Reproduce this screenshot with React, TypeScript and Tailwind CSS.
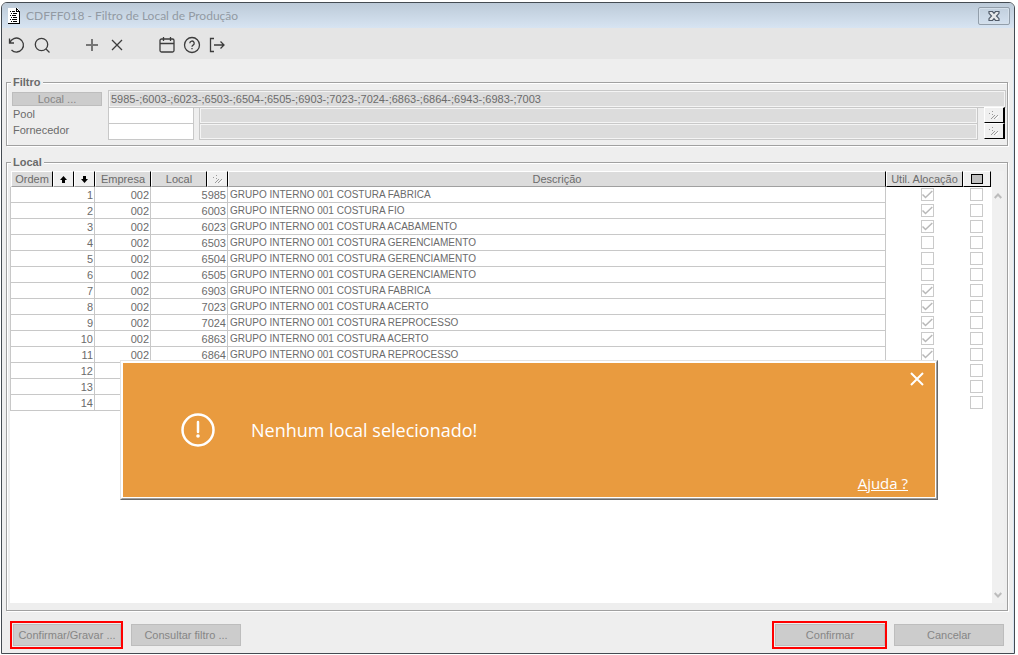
import React from "react";

type Row = { empresa?: string; local?: string; descricao?: string; aloca?: boolean };

const rows: Row[] = [
  { empresa: "002", local: "5985", descricao: "GRUPO INTERNO 001 COSTURA FABRICA", aloca: true },
  { empresa: "002", local: "6003", descricao: "GRUPO INTERNO 001 COSTURA FIO", aloca: true },
  { empresa: "002", local: "6023", descricao: "GRUPO INTERNO 001 COSTURA ACABAMENTO", aloca: true },
  { empresa: "002", local: "6503", descricao: "GRUPO INTERNO 001 COSTURA GERENCIAMENTO" },
  { empresa: "002", local: "6504", descricao: "GRUPO INTERNO 001 COSTURA GERENCIAMENTO" },
  { empresa: "002", local: "6505", descricao: "GRUPO INTERNO 001 COSTURA GERENCIAMENTO" },
  { empresa: "002", local: "6903", descricao: "GRUPO INTERNO 001 COSTURA FABRICA", aloca: true },
  { empresa: "002", local: "7023", descricao: "GRUPO INTERNO 001 COSTURA ACERTO", aloca: true },
  { empresa: "002", local: "7024", descricao: "GRUPO INTERNO 001 COSTURA REPROCESSO", aloca: true },
  { empresa: "002", local: "6863", descricao: "GRUPO INTERNO 001 COSTURA ACERTO", aloca: true },
  { empresa: "002", local: "6864", descricao: "GRUPO INTERNO 001 COSTURA REPROCESSO", aloca: true },
  {},
  {},
  {},
];

const locais = "5985-;6003-;6023-;6503-;6504-;6505-;6903-;7023-;7024-;6863-;6864-;6943-;6983-;7003";

function Dots() {
  return (
    <svg width="12" height="9" viewBox="0 0 12 9" aria-hidden="true">
      <path d="M1 2h1v1h-1zM4 0h1v1h-1zM4 3h1v1h-1zM3 7h1v1h-1zM4 6h1v1h-1zM5 5h1v1h-1zM6 4h1v1h-1zM6 7h1v1h-1zM7 6h1v1h-1zM8 5h1v1h-1zM9 4h1v1h-1z" fill="#9a9a9a" />
      <path d="M8 7h1v1h-1zM9 6h1v1h-1zM10 5h1v1h-1z" fill="#fff" />
    </svg>
  );
}

function Arrow({ down = false }: { down?: boolean }) {
  return (
    <svg width="7" height="7" viewBox="0 0 7 7" fill="#000" aria-hidden="true">
      <path d={down ? "M2 0h3v3h2L3.500 7 0 3h2z" : "M2 7h3V4h2L3.500 0 0 4h2z"} />
    </svg>
  );
}

function Check({ checked = false, label }: { checked?: boolean; label: string }) {
  return (
    <span className="mx-auto grid h-[13px] w-[13px] place-items-center">
      <input
        type="checkbox"
        defaultChecked={checked}
        aria-label={label}
        className="col-start-1 row-start-1 h-[13px] w-[13px] appearance-none border border-[#cacaca] bg-white"
      />
      {checked && (
        <svg className="pointer-events-none col-start-1 row-start-1" width="11" height="9" viewBox="0 0 11 9" fill="none" stroke="#b8b8b8" strokeWidth="1.5" aria-hidden="true">
          <path d="M.5 4.500L3.500 7.500 10.300 1" />
        </svg>
      )}
    </span>
  );
}

function Tool({ label, className = "", children }: { label: string; className?: string; children: React.ReactNode }) {
  return (
    <button type="button" aria-label={label} className={`grid h-[25px] w-[25px] place-items-center ${className}`}>
      <svg width="18" height="18" viewBox="0 0 18 18" fill="none" stroke="#3c3c3c" strokeWidth="1.3" aria-hidden="true">
        {children}
      </svg>
    </button>
  );
}

const headBase = "flex h-4 items-center justify-center border-t border-l border-t-white border-l-white border-b border-b-[#a0a0a0] border-r border-r-black";
const headGray = `${headBase} bg-[#dcdcdc]`;
const headBtn = `${headBase} bg-[#f0f0f0]`;
const footBtn = "h-[22px] border border-[#bdbdbd] bg-[#cccccc] text-[#868686]";
const gray = "min-w-0 border border-[#c8c8c8] bg-[#dcdcdc] shadow-[inset_0_0_0_1px_#f4f4f4] outline-none";
const cellBase = "h-4 border-r border-b border-[#c8c8c8] p-0 pt-px leading-[14px]";
const cell = `${cellBase} pr-px text-right`;
const lookup = "grid h-4 w-[21px] place-items-center border-t border-l border-r-2 border-b border-t-white border-l-white border-r-black border-b-black bg-[#f0f0f0]";
const group = "relative border border-[#a0a0a0] shadow-[1px_1px_0_#fff,inset_1px_1px_0_#fff]";
const legend = "absolute -top-[9px] left-1 bg-[#eeeeee] px-[2px] text-[11px] leading-4 font-bold text-[#6b6b6b]";

export default function App() {
  return (
    <div className="flex min-h-screen flex-col bg-white pt-[2px] pr-[3px] pb-px pl-px font-['Liberation_Sans',Arial,sans-serif] text-[11px] leading-4 text-[#6b6b6b]">
      <main className="relative flex flex-1 flex-col rounded-t-[6px] border border-[#444b52] bg-[#eeeeee]">
        <header className="flex h-[25px] items-center rounded-t-[5px] bg-linear-to-b from-[#bccad8] to-[#d7e4f2] pr-1 pl-[6px]">
          <svg width="12" height="16" viewBox="0 0 12 16" shapeRendering="crispEdges" aria-hidden="true">
            <path d="M0 0h9l3 3v13H0z" fill="#fff" />
            <path d="M0 15h12v1H0zM11 3h1v13h-1zM8 0h1v4H8zM8 3h4v1H8zM9 1h1v1H9zM10 2h1v1h-1z" fill="#000" />
            <path d="M2 3h1v1H2zM4 3h3v1H4zM3 5h1v1H3zM5 5h4v1H5zM2 7h1v1H2zM4 7h4v1H4zM3 9h1v1H3zM5 9h4v1H5zM2 11h1v1H2zM4 11h5v1H4zM3 13h1v1H3zM5 13h4v1H5z" fill="#000" />
          </svg>
          <h1 className="ml-[6px] flex-1 font-['Lato','Open_Sans',sans-serif] text-[12px] font-normal text-[#929aa3]">CDFFF018 - Filtro de Local de Produção</h1>
          <button type="button" aria-label="Fechar janela" className="grid h-[18px] w-8 place-items-center rounded-[2px] border border-[#929eaa] shadow-[inset_0_0_0_1px_#d5e0eb]">
            <svg width="12" height="10" viewBox="0 0 12 10" fill="none" aria-hidden="true">
              <path d="M1 .5h3.500L6 2.300 7.500 .5H11v1.800L8.500 5 11 7.700v1.800H7.500L6 7.700 4.500 9.500H1V7.700L3.500 5 1 2.300z" fill="#e6e8ea" stroke="#505a68" strokeWidth="1.200" />
            </svg>
          </button>
        </header>

        <nav className="flex h-[31px] items-center bg-[#e5e5e5] pt-[2px] pl-[2px]">
          <Tool label="Desfazer"><path d="M1.500 2.500v4.500h4.500M1.800 6.800A7 7 0 1 1 3.500 14" /></Tool>
          <Tool label="Pesquisar"><circle cx="8.500" cy="8.500" r="6.200" /><path d="M13 13l3.500 3.500" /></Tool>
          <Tool label="Adicionar" className="ml-[25px]"><path d="M9 3v12M3 9h12" stroke="#777" strokeWidth="2" /></Tool>
          <Tool label="Limpar"><path d="M4 4l10 10M14 4L4 14" /></Tool>
          <Tool label="Agenda" className="ml-[25px]"><rect x="2" y="3" width="14" height="13" rx="1.500" /><path d="M2 7.500h14M5.500 1v4M12.500 1v4" /></Tool>
          <Tool label="Ajuda"><circle cx="9" cy="9" r="7.500" /><path d="M6.800 7.200a2.200 2.200 0 1 1 3.300 1.900c-.8.5-1.100.8-1.100 1.700M9 12v1.300" /></Tool>
          <Tool label="Sair"><path d="M6 2.500H2.500v13H6M6 9h10M12.500 5.500L16 9l-3.500 3.500" /></Tool>
        </nav>

        <div className="flex flex-1 flex-col border-r border-r-[#d7e4f2] pt-[23px] pr-[5px] pb-1 pl-1">
          <section className={`${group} flex flex-col pt-2 pr-px pb-[6px] pl-[5px]`} aria-labelledby="filtro">
            <h2 id="filtro" className={legend}>Filtro</h2>
            <div className="flex h-4 items-center">
              <button type="button" className="h-[14px] w-[90px] border border-[#bdbdbd] bg-[#cccccc] leading-3 text-[#868686]">Local ...</button>
              <input aria-label="Locais" readOnly defaultValue={locais} className={`${gray} ml-[6px] h-[18px] flex-1 pl-[2px]`} />
            </div>
            <div className="flex h-4 items-center">
              <label htmlFor="pool" className="w-24 pb-[2px] pl-px">Pool</label>
              <input id="pool" className="h-[17px] w-[86px] border border-[#c8c8c8] bg-white outline-none" />
              <input aria-label="Descrição do pool" readOnly className={`${gray} ml-[5px] h-[17px] flex-1`} />
              <button type="button" aria-label="Buscar pool" className={`${lookup} ml-[6px] mr-px`}><Dots /></button>
            </div>
            <div className="flex h-4 items-center">
              <label htmlFor="fornecedor" className="w-24 pb-[2px] pl-px">Fornecedor</label>
              <input id="fornecedor" className="h-[17px] w-[86px] border border-[#c8c8c8] bg-white outline-none" />
              <input aria-label="Descrição do fornecedor" readOnly className={`${gray} ml-[5px] h-[17px] flex-1`} />
              <button type="button" aria-label="Buscar fornecedor" className={`${lookup} ml-[6px] mr-px`}><Dots /></button>
            </div>
          </section>

          <section className={`${group} mt-4 flex flex-1 flex-col pt-2 pr-[3px] pb-[7px] pl-[3px]`} aria-labelledby="local">
            <h2 id="local" className={legend}>Local</h2>
            <div className="flex flex-1">
              <div className="flex-1 bg-white">
                <table className="w-full table-fixed border-separate border-spacing-0">
                  <colgroup>
                    <col className="w-[85px]" />
                    <col className="w-[56px]" />
                    <col className="w-[77px]" />
                    <col />
                    <col className="w-[77px]" />
                    <col className="w-[29px]" />
                  </colgroup>
                  <thead className="bg-[#eeeeee]">
                    <tr>
                      <th className="p-0 pl-px font-normal">
                        <div className="flex">
                          <span className={`${headGray} flex-1`}>Ordem</span>
                          <button type="button" aria-label="Subir" className={`${headBtn} w-[21px]`}><Arrow /></button>
                          <button type="button" aria-label="Descer" className={`${headBtn} w-[21px]`}><Arrow down /></button>
                        </div>
                      </th>
                      <th className="p-0 font-normal"><div className={headGray}>Empresa</div></th>
                      <th className="p-0 font-normal">
                        <div className="flex">
                          <span className={`${headGray} flex-1`}>Local</span>
                          <button type="button" aria-label="Buscar local" className={`${headBtn} w-[21px]`}><Dots /></button>
                        </div>
                      </th>
                      <th className="p-0 font-normal"><div className={headGray}>Descrição</div></th>
                      <th className="p-0 font-normal whitespace-nowrap"><div className={`${headGray} border-b-black`}>Util. Alocação</div></th>
                      <th className="p-0 pr-px font-normal">
                        <button type="button" aria-label="Marcar todos" className={`${headBtn} w-full border-b-black`}>
                          <span className="h-[10px] w-3 border border-black bg-[#c0c0c0]" />
                        </button>
                      </th>
                    </tr>
                  </thead>
                  <tbody>
                    {rows.map((r, i) => (
                      <tr key={i}>
                        <td className={`${cell} border-l`}>{i + 1}</td>
                        <td className={cell}>{r.empresa}</td>
                        <td className={cell}>{r.local}</td>
                        <td className={`${cellBase} pl-[2px] text-[10px] whitespace-nowrap`}>{r.descricao}</td>
                        <td className="h-4 p-0 pb-px pl-[6px]"><Check checked={r.aloca} label={`Utiliza alocação ${i + 1}`} /></td>
                        <td className="h-4 p-0 pr-[2px] pb-px"><Check label={`Selecionar ${i + 1}`} /></td>
                      </tr>
                    ))}
                  </tbody>
                </table>
              </div>
              <div className="flex w-3 flex-col items-center justify-between bg-[#f0f0f0] pt-[22px] pb-[5px]">
                <svg width="8" height="6" viewBox="0 0 8 6" fill="none" stroke="#bcbcbc" strokeWidth="2" aria-hidden="true"><path d="M.7 5L4 1.500 7.300 5" /></svg>
                <svg width="8" height="6" viewBox="0 0 8 6" fill="none" stroke="#bcbcbc" strokeWidth="2" aria-hidden="true"><path d="M.7 1L4 4.500 7.300 1" /></svg>
              </div>
            </div>
          </section>

          <footer className="flex items-center justify-between pt-[10px] pr-1 pl-1">
            <div className="flex items-center gap-2">
              <span className="border-2 border-[#ff0000] p-px pr-0"><button type="button" className={`${footBtn} block w-[108px]`}>Confirmar/Gravar ...</button></span>
              <button type="button" className={`${footBtn} w-[110px]`}>Consultar filtro ...</button>
            </div>
            <div className="flex items-center gap-[7px]">
              <span className="border-2 border-[#ff0000] p-px pr-0"><button type="button" className={`${footBtn} block w-[110px]`}>Confirmar</button></span>
              <button type="button" className={`${footBtn} w-[110px]`}>Cancelar</button>
            </div>
          </footer>
        </div>

        <div role="alertdialog" aria-labelledby="aviso" className="absolute top-[357px] right-[76px] left-[118px] border border-t-[#e3e3e3] border-r-[#696969] border-b-[#696969] border-l-[#e3e3e3] font-['Open_Sans','Noto_Sans',sans-serif] text-white">
          <div className="border border-t-white border-r-[#a0a0a0] border-b-[#a0a0a0] border-l-white bg-white p-px">
            <div className="flex h-[134px] flex-col justify-between bg-[#e99b3f]">
              <button type="button" aria-label="Fechar aviso" className="mt-2 mr-[10px] grid h-4 w-4 place-items-center self-end">
                <svg width="14" height="14" viewBox="0 0 14 14" stroke="#fff" strokeWidth="2" aria-hidden="true"><path d="M1 1l12 12M13 1L1 13" /></svg>
              </button>
              <div className="flex items-center gap-9 pl-[58px]">
                <svg width="34" height="34" viewBox="0 0 34 34" fill="none" stroke="#fff" aria-hidden="true">
                  <circle cx="17" cy="17" r="15.500" strokeWidth="2.500" />
                  <path d="M17 9v10" strokeWidth="2.500" strokeLinecap="round" />
                  <circle cx="17" cy="23" r="1.800" fill="#fff" stroke="none" />
                </svg>
                <p id="aviso" className="text-[18px] leading-6">Nenhum local selecionado!</p>
              </div>
              <a href="#ajuda" className="mr-[27px] mb-1 self-end text-[15px] leading-5 underline">Ajuda ?</a>
            </div>
          </div>
        </div>
      </main>
    </div>
  );
}
